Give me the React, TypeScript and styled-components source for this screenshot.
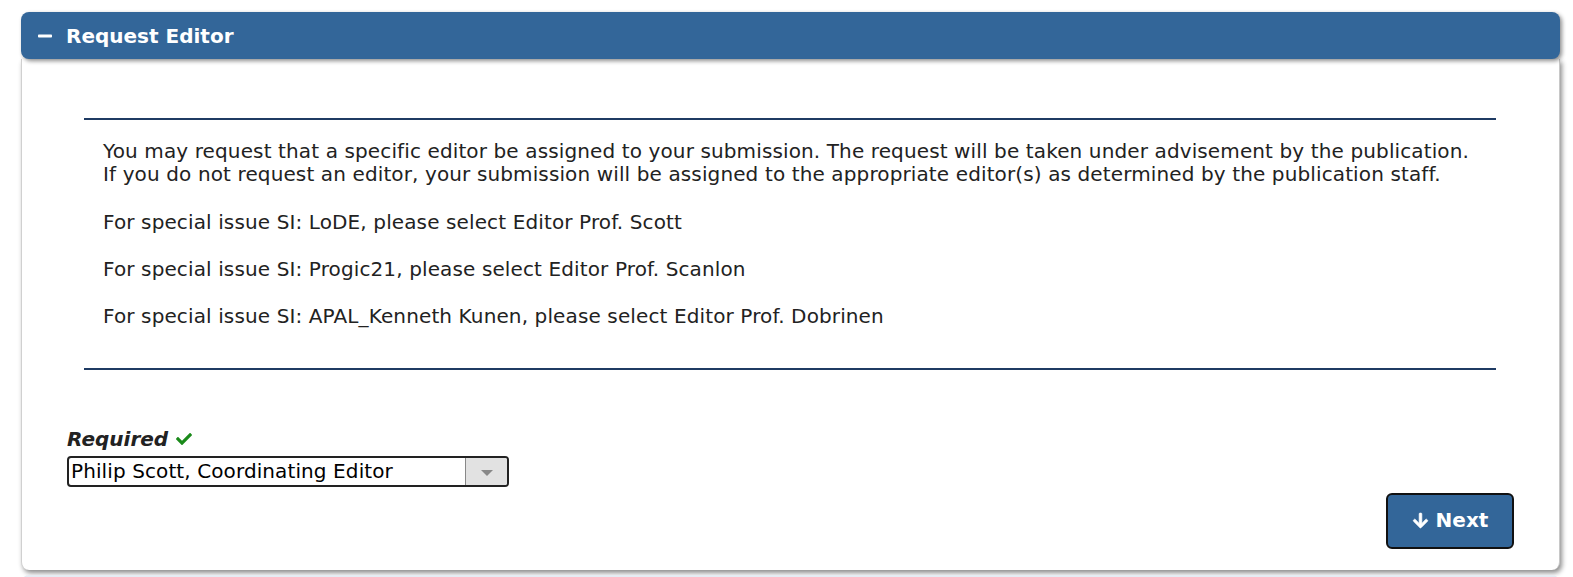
import React from "react";
import styled, { createGlobalStyle } from "styled-components";
import { FaCheck, FaArrowDown, FaMinus } from "react-icons/fa";

const Global = createGlobalStyle`
  html, body { margin: 0; padding: 0; background: #ffffff; }
  body { font-family: "DejaVu Sans", Verdana, sans-serif; color: #222; }
  * { box-sizing: border-box; }
`;

const Page = styled.div`
  padding: 12px 13px 0 21px;
  height: 577px;
  overflow: hidden;
`;

const Panel = styled.section`
  display: flex;
  flex-direction: column;
`;

const Header = styled.div`
  position: relative;
  z-index: 1;
  height: 47px;
  background: #336699;
  border-radius: 8px;
  box-shadow: 2px 2px 4px rgba(0, 0, 0, 0.45);
  display: flex;
  align-items: center;
  padding-left: 16px;
  gap: 13px;
  color: #fff;
  font-weight: bold;
  font-size: 20px;
`;

const Body = styled.div`
  background: #fff;
  height: 511px;
  border-radius: 0 0 8px 8px;
  box-shadow: 2px 3px 5px rgba(0, 0, 0, 0.45);
  border-left: 1px solid #d0d0d0;
  border-right: 1px solid #c8c8c8;
  padding: 59px 45px 0 45px;
  display: flex;
  flex-direction: column;
`;

const Notice = styled.div`
  margin: 0 18px 0 17px;
  border-top: 2px solid #1f3b63;
  border-bottom: 2px solid #1f3b63;
  padding: 20px 4px 16px 19px;
`;

const Para = styled.p`
  margin: 0 0 24px 0;
  font-size: 20px;
  letter-spacing: 0.12px;
  line-height: 23px;
  color: #222;
  &:first-child { margin-bottom: 25px; }
`;

const Field = styled.div`
  margin-top: 58px;
  display: flex;
  flex-direction: column;
  align-items: flex-start;
`;

const Label = styled.label`
  font-weight: bold;
  font-style: italic;
  font-size: 20px;
  color: #222;
  display: flex;
  align-items: center;
  gap: 8px;
  line-height: 22px;
  svg { color: #1a8a1a; font-size: 16px; }
`;

const Select = styled.div`
  margin-top: 6px;
  width: 442px;
  height: 31px;
  border: 2px solid #222;
  border-radius: 4px;
  display: flex;
  align-items: stretch;
  overflow: hidden;
`;

const SelectText = styled.span`
  flex: 1;
  font-size: 20px;
  letter-spacing: 0.1px;
  line-height: 26px;
  padding-left: 2px;
  color: #000;
  white-space: nowrap;
`;

const SelectArrow = styled.span`
  width: 42px;
  background: #e2e2e2;
  border-left: 1px solid #888;
  display: flex;
  align-items: center;
  justify-content: center;
  &::after {
    content: "";
    display: block;
    margin-top: 3px;
    border-left: 6px solid transparent;
    border-right: 6px solid transparent;
    border-top: 6px solid #888;
  }
`;

const Actions = styled.div`
  display: flex;
  justify-content: flex-end;
  margin-top: 6px;
`;

const NextButton = styled.button`
  width: 128px;
  height: 56px;
  background: #336699;
  border: 2px solid #111;
  border-radius: 6px;
  color: #fff;
  font-family: "DejaVu Sans", Verdana, sans-serif;
  font-weight: bold;
  font-size: 20px;
  display: flex;
  align-items: center;
  justify-content: center;
  gap: 7px;
  padding: 0 0 2px 0;
  svg { font-size: 17px; stroke: #fff; stroke-width: 20px; }
`;

const NextPanelHint = styled.div`
  margin-top: 5px;
  height: 10px;
  background: #e6ecf3;
  border-radius: 8px 8px 0 0;
`;

export default function App() {
  return (
    <>
      <Global />
      <Page>
        <Panel>
          <Header>
            <FaMinus size={16} />
            <span>Request Editor</span>
          </Header>
          <Body>
            <Notice>
              <Para>
                You may request that a specific editor be assigned to your submission. The request will be taken under advisement by the publication.
                <br />
                If you do not request an editor, your submission will be assigned to the appropriate editor(s) as determined by the publication staff.
              </Para>
              <Para>For special issue SI: LoDE, please select Editor Prof. Scott</Para>
              <Para>For special issue SI: Progic21, please select Editor Prof. Scanlon</Para>
              <Para>For special issue SI: APAL_Kenneth Kunen, please select Editor Prof. Dobrinen</Para>
            </Notice>
            <Field>
              <Label>
                Required <FaCheck />
              </Label>
              <Select>
                <SelectText>Philip Scott, Coordinating Editor</SelectText>
                <SelectArrow />
              </Select>
            </Field>
            <Actions>
              <NextButton>
                <FaArrowDown />
                Next
              </NextButton>
            </Actions>
          </Body>
          <NextPanelHint />
        </Panel>
      </Page>
    </>
  );
}
